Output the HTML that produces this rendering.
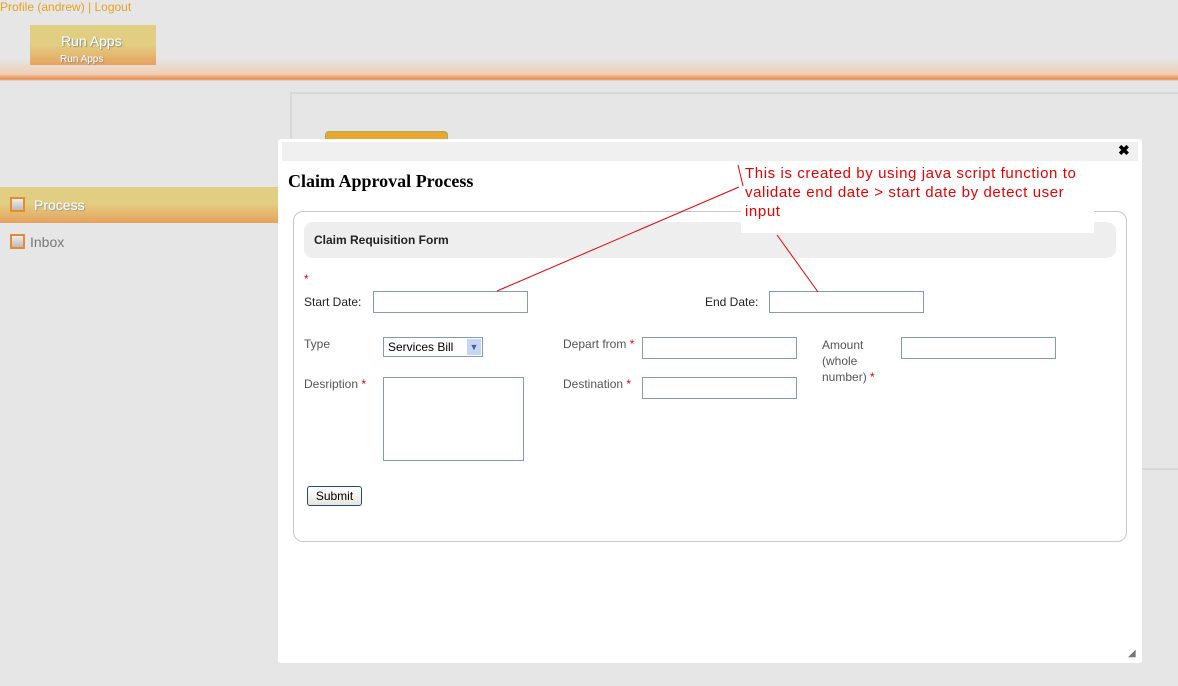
<!DOCTYPE html>
<html><head><style>
body{margin:0;width:1178px;height:686px;background:#e6e6e6;position:relative;overflow:hidden;font-family:"Liberation Sans",sans-serif;}
.a{position:absolute}
.lbl{position:absolute;font-size:12px;color:#555}
.req{color:#e00}
.inp{position:absolute;border:1px solid #7f9db9;background:#fff;box-sizing:border-box}
</style></head><body>
<div class="a" style="left:0;top:0;width:1178px;height:82px;background:linear-gradient(#e6e6e6 0,#e6e6e6 58px,#f0cfb4 74px,#e98a4a 79px,#e6e6e6 81px)"></div>
<div class="a" style="left:0;top:0;font-size:12px;color:#e8a020">Profile (andrew) | Logout</div>
<div class="a" style="left:30px;top:25px;width:126px;height:40px;background:linear-gradient(#e2ce82 0,#e2ce82 50%,#e6a25e 100%)"></div>
<div class="a" style="left:61px;top:33px;font-size:14px;color:#fff;text-shadow:1px 1px 1px #888">Run Apps</div>
<div class="a" style="left:60px;top:54px;font-size:10px;color:#fff;text-shadow:1px 1px 1px #888">Run Apps</div>
<div class="a" style="left:290px;top:92px;width:900px;height:378px;border:2px solid #d8d8d8;box-sizing:border-box"></div>
<div class="a" style="left:325px;top:131px;width:121px;height:20px;background:#e8a830;border-radius:4px;border:1px solid #a8a860"></div>
<div class="a" style="left:0;top:187px;width:278px;height:36px;background:linear-gradient(#e2ce82 0,#e2ce82 45%,#e6a25e 100%)"></div>
<div class="a" style="left:10px;top:197px;width:15px;height:15px;background:#e88a30;box-sizing:border-box;border:2px solid #e88a30;"><div style="width:11px;height:11px;background:linear-gradient(#eee,#bbb)"></div></div>
<div class="a" style="left:34px;top:197px;font-size:14px;color:#fff;text-shadow:1px 1px 1px #999">Process</div>
<div class="a" style="left:10px;top:234px;width:15px;height:15px;background:#e88a30;box-sizing:border-box;border:2px solid #e88a30;"><div style="width:11px;height:11px;background:linear-gradient(#eee,#bbb)"></div></div>
<div class="a" style="left:30px;top:234px;font-size:14px;color:#777">Inbox</div>

<div class="a" style="left:278px;top:139px;width:864px;height:524px;background:#fff;border-radius:3px"></div>
<div class="a" style="left:282px;top:142px;width:856px;height:19px;background:#f0f0f0"></div>
<div class="a" style="left:1118px;top:142px;font-size:14px;font-weight:bold">✖</div>
<div class="a" style="left:288px;top:171px;font-family:'Liberation Serif',serif;font-weight:bold;font-size:18px">Claim Approval Process</div>
<div class="a" style="left:293px;top:211px;width:834px;height:331px;border:1px solid #c8c8c8;border-radius:10px;box-sizing:border-box"></div>
<div class="a" style="left:304px;top:222px;width:812px;height:36px;background:#eee;border-radius:9px"></div>
<div class="a" style="left:314px;top:233px;font-size:12px;font-weight:bold;color:#222">Claim Requisition Form</div>
<div class="a req" style="left:304px;top:272px;font-size:12px">*</div>
<div class="lbl" style="left:304px;top:295px;color:#222">Start Date:</div>
<div class="inp" style="left:373px;top:291px;width:155px;height:22px"></div>
<div class="lbl" style="left:705px;top:295px;color:#222">End Date:</div>
<div class="inp" style="left:769px;top:291px;width:155px;height:22px"></div>
<div class="lbl" style="left:304px;top:337px">Type</div>
<div class="a" style="left:383px;top:337px;width:100px;height:20px;border:1px solid #7f9db9;box-sizing:border-box;background:#fff"><span style="position:absolute;left:4px;top:2px;font-size:12px">Services Bill</span><div style="position:absolute;right:1px;top:1px;width:14px;height:16px;background:#c6d4f7;font-size:9px;color:#4d6185;text-align:center;line-height:16px">▼</div></div>
<div class="lbl" style="left:304px;top:377px">Desription <span class="req">*</span></div>
<div class="inp" style="left:383px;top:377px;width:141px;height:84px"></div>
<div class="lbl" style="left:563px;top:337px">Depart from <span class="req">*</span></div>
<div class="inp" style="left:642px;top:337px;width:155px;height:22px"></div>
<div class="lbl" style="left:563px;top:377px">Destination <span class="req">*</span></div>
<div class="inp" style="left:642px;top:377px;width:155px;height:22px"></div>
<div class="lbl" style="left:822px;top:337px;line-height:16px">Amount<br>(whole<br>number) <span class="req">*</span></div>
<div class="inp" style="left:901px;top:337px;width:155px;height:22px"></div>
<div class="a" style="left:307px;top:486px;width:55px;height:20px;border:1px solid #1c4a7a;border-radius:3px;background:linear-gradient(#fff,#e6e6dc);box-sizing:border-box;font-size:12px;text-align:center;line-height:18px">Submit</div>
<div class="a" style="left:1128px;top:648px;font-size:10px;color:#777">◢</div>

<div class="a" style="left:741px;top:161px;width:353px;height:72px;background:#fff"></div>
<div class="a" style="left:745px;top:164px;font-size:15px;color:#e00;line-height:19px;width:332px;letter-spacing:0.6px">This is created by using java script function to validate end date &gt; start date by detect user input</div>
<svg class="a" style="left:0;top:0" width="1178" height="686"><line x1="739" y1="187" x2="497" y2="291" stroke="#e00" stroke-width="1"/><line x1="743" y1="186" x2="738" y2="165" stroke="#e00"/><line x1="777" y1="235" x2="818" y2="292" stroke="#e00"/></svg>
</body></html>
